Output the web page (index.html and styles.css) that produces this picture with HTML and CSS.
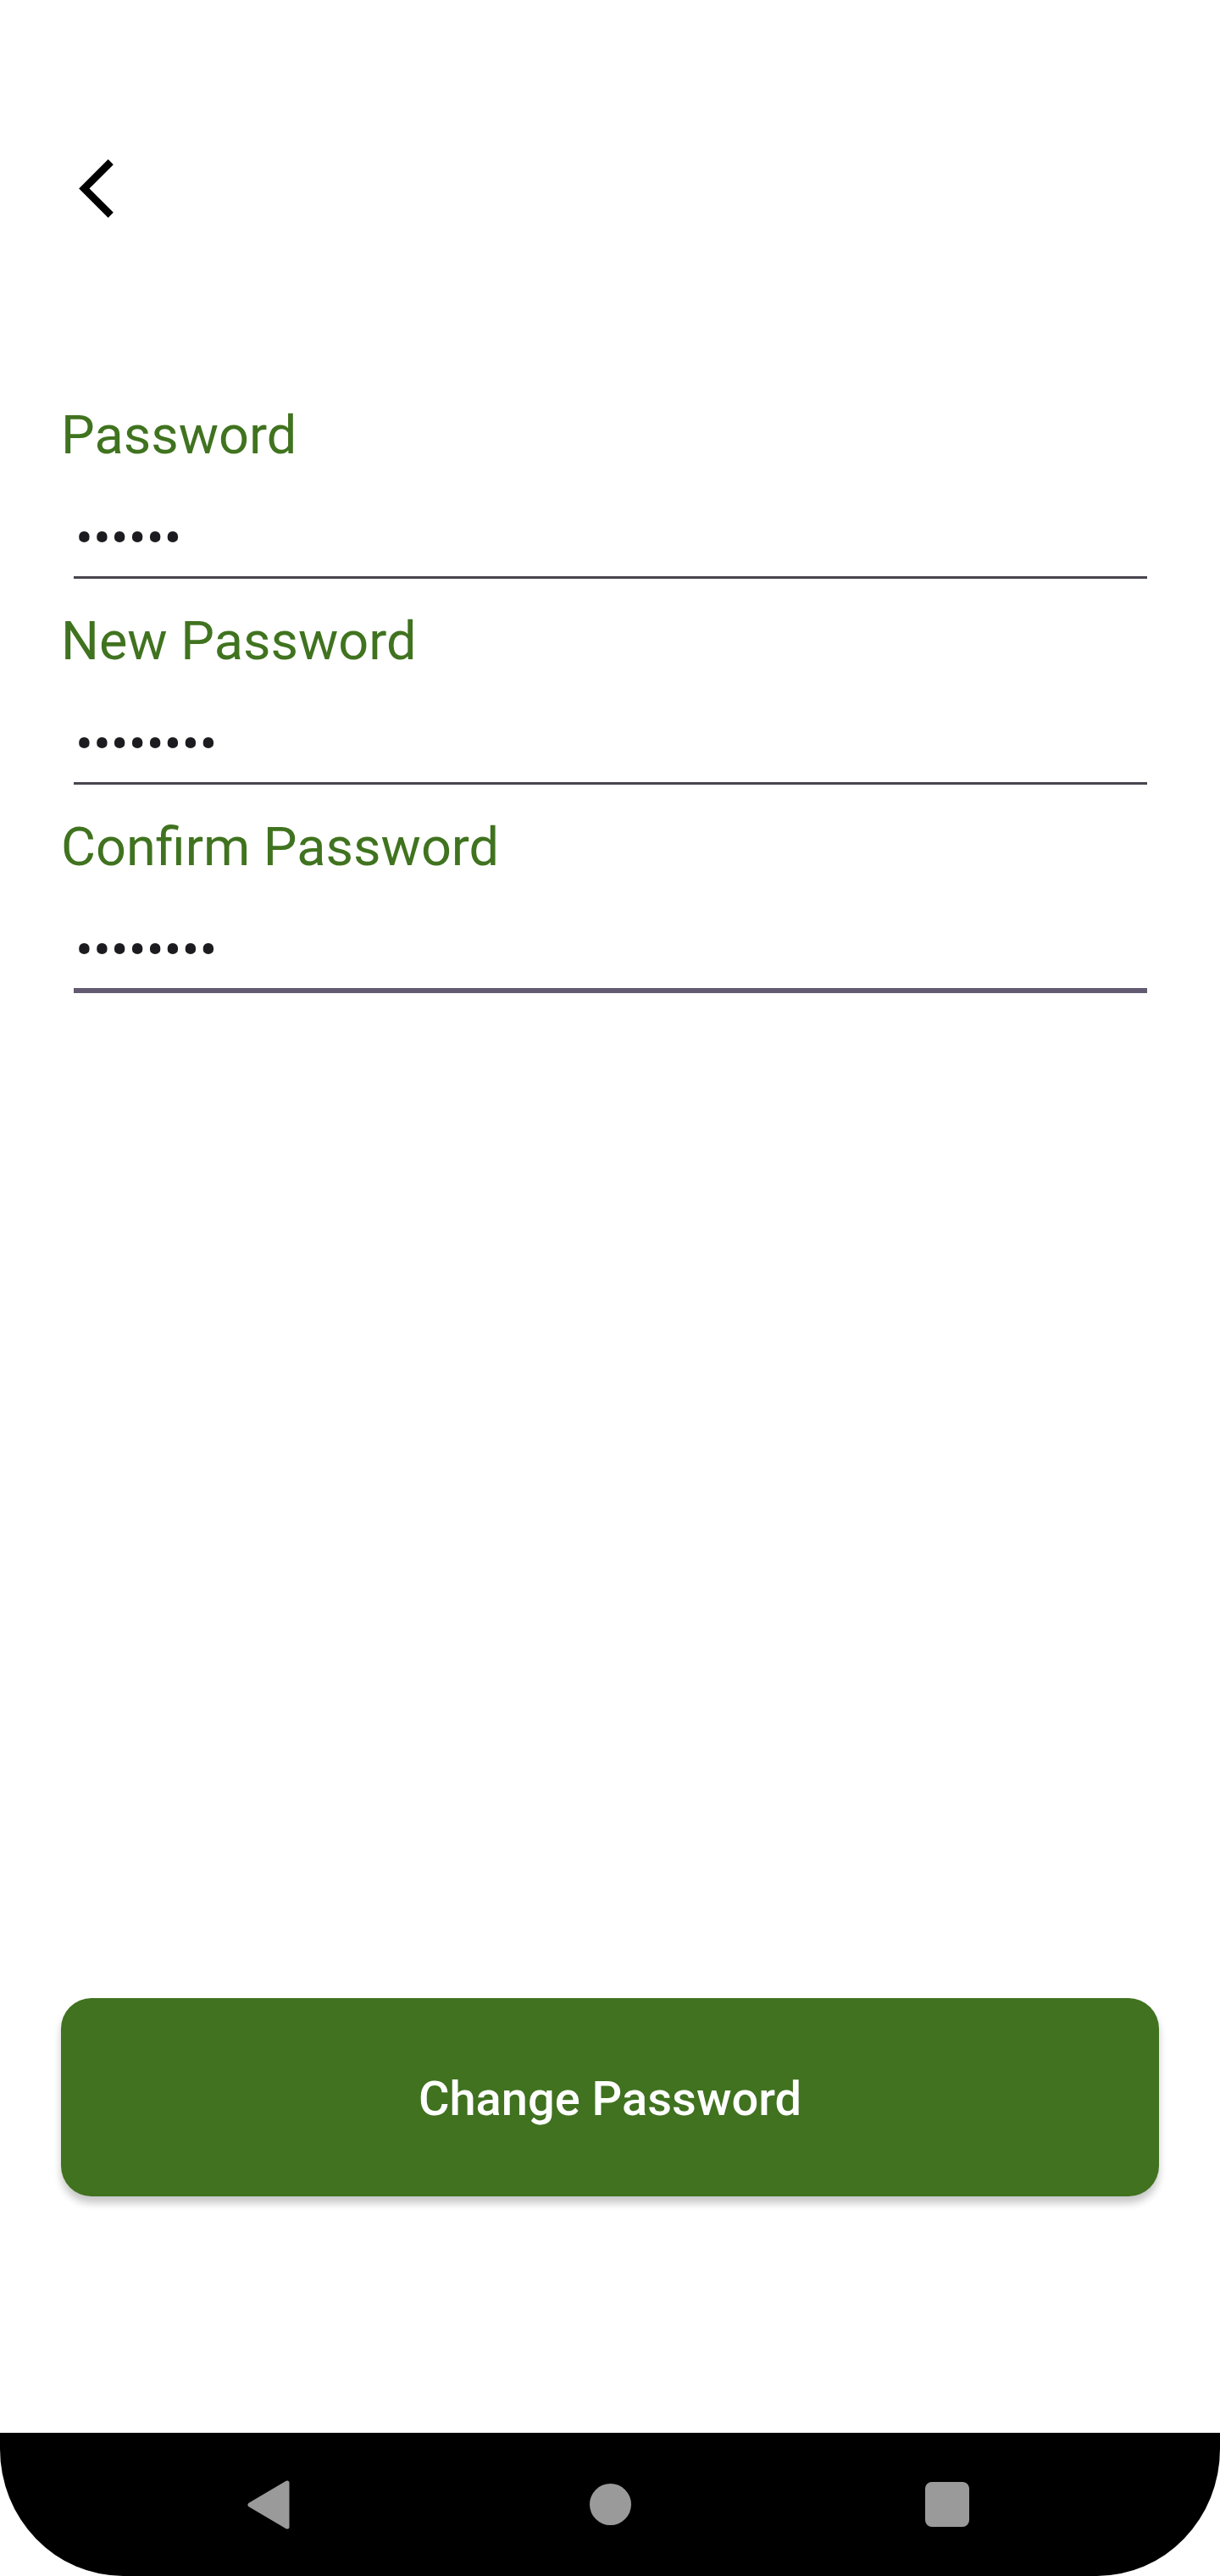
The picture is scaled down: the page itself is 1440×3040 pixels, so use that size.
FILE: index.html
```html
<!DOCTYPE html>
<html lang="en">
<head>
<meta charset="utf-8">
<title>Change Password</title>
<link rel="stylesheet" href="styles.css">
</head>
<body>
<div class="screen">
  <header class="topbar">
    <button class="back" aria-label="Back">
      <svg class="back-icon" viewBox="0 2.1 11.67 19.8" width="41" height="69" aria-hidden="true">
        <path d="M11.67 3.87L9.9 2.1 0 12l9.9 9.9 1.77-1.77L3.54 12z" fill="#000"/>
      </svg>
    </button>
  </header>

  <main class="form">
    <div class="field">
      <div class="label">Password</div>
      <div class="input"><span class="dots">••••••</span></div>
    </div>
    <div class="field">
      <div class="label">New Password</div>
      <div class="input"><span class="dots">••••••••</span></div>
    </div>
    <div class="field">
      <div class="label">Confirm Password</div>
      <div class="input input-focused"><span class="dots">••••••••</span></div>
    </div>
  </main>

  <div class="actions">
    <button class="primary">Change Password</button>
  </div>

  <nav class="navbar">
    <div class="nav-item nav-back">
      <svg width="52" height="60" viewBox="0 0 52 60" aria-hidden="true">
        <path d="M4 30 L48 4 L48 56 Z" fill="#9a9a9a" stroke="#9a9a9a" stroke-width="5" stroke-linejoin="round"/>
      </svg>
    </div>
    <div class="nav-item nav-mid"><span class="nav-home"></span></div>
    <div class="nav-item nav-last"><span class="nav-recent"></span></div>
  </nav>
</div>
</body>
</html>
```

FILE: styles.css
```css
* { box-sizing: border-box; }

html, body {
  margin: 0;
  padding: 0;
  background: #ffffff;
}

body {
  font-family: Roboto, "Noto Sans", "Liberation Sans", sans-serif;
}

.screen {
  width: 1440px;
  height: 3040px;
  display: flex;
  flex-direction: column;
  background: #ffffff;
  overflow: hidden;
}

.topbar {
  height: 440px;
  padding: 188px 0 0 93px;
}

.back {
  display: block;
  border: 0;
  padding: 0;
  margin: 0;
  background: transparent;
  width: 41px;
  height: 69px;
}

.back-icon {
  display: block;
}

.form {
  display: flex;
  flex-direction: column;
}

.field {
  padding-top: 37px;
}

.label {
  padding-left: 72px;
  font-size: 63px;
  line-height: 74px;
  height: 74px;
  color: #40731f;
  font-weight: 400;
}

.input {
  margin: 0 86px 0 87px;
  height: 132px;
  border-bottom: 3px solid #49454f;
  padding-top: 49px;
  padding-left: 2px;
}

.input-focused {
  height: 135px;
  border-bottom: 6px solid #625b71;
}

.dots {
  display: block;
  font-size: 62px;
  line-height: 70px;
  color: #1c1b1f;
}

.actions {
  margin-top: auto;
  padding: 0 72px;
}

.primary {
  display: block;
  width: 100%;
  height: 234px;
  border: 0;
  border-radius: 36px;
  background: #40721f;
  color: #ffffff;
  font-family: Roboto, "Noto Sans", "Liberation Sans", sans-serif;
  font-size: 56px;
  font-weight: 500;
  padding: 4px 0 0;
  box-shadow: 0 8px 10px rgba(0, 0, 0, 0.22);
}

.navbar {
  margin-top: 279px;
  height: 169px;
  background: #000000;
  border-bottom-left-radius: 145px 150px;
  border-bottom-right-radius: 145px 150px;
  display: flex;
  align-items: center;
  padding-left: 117px;
}

.nav-item {
  display: flex;
  align-items: center;
  justify-content: center;
}

.nav-back { width: 400px; }
.nav-mid { width: 406px; }
.nav-last { width: 390px; }

.nav-home {
  display: block;
  width: 49px;
  height: 49px;
  border-radius: 50%;
  background: #9a9a9a;
}

.nav-recent {
  display: block;
  width: 52px;
  height: 53px;
  border-radius: 8px;
  background: #9a9a9a;
}
```
